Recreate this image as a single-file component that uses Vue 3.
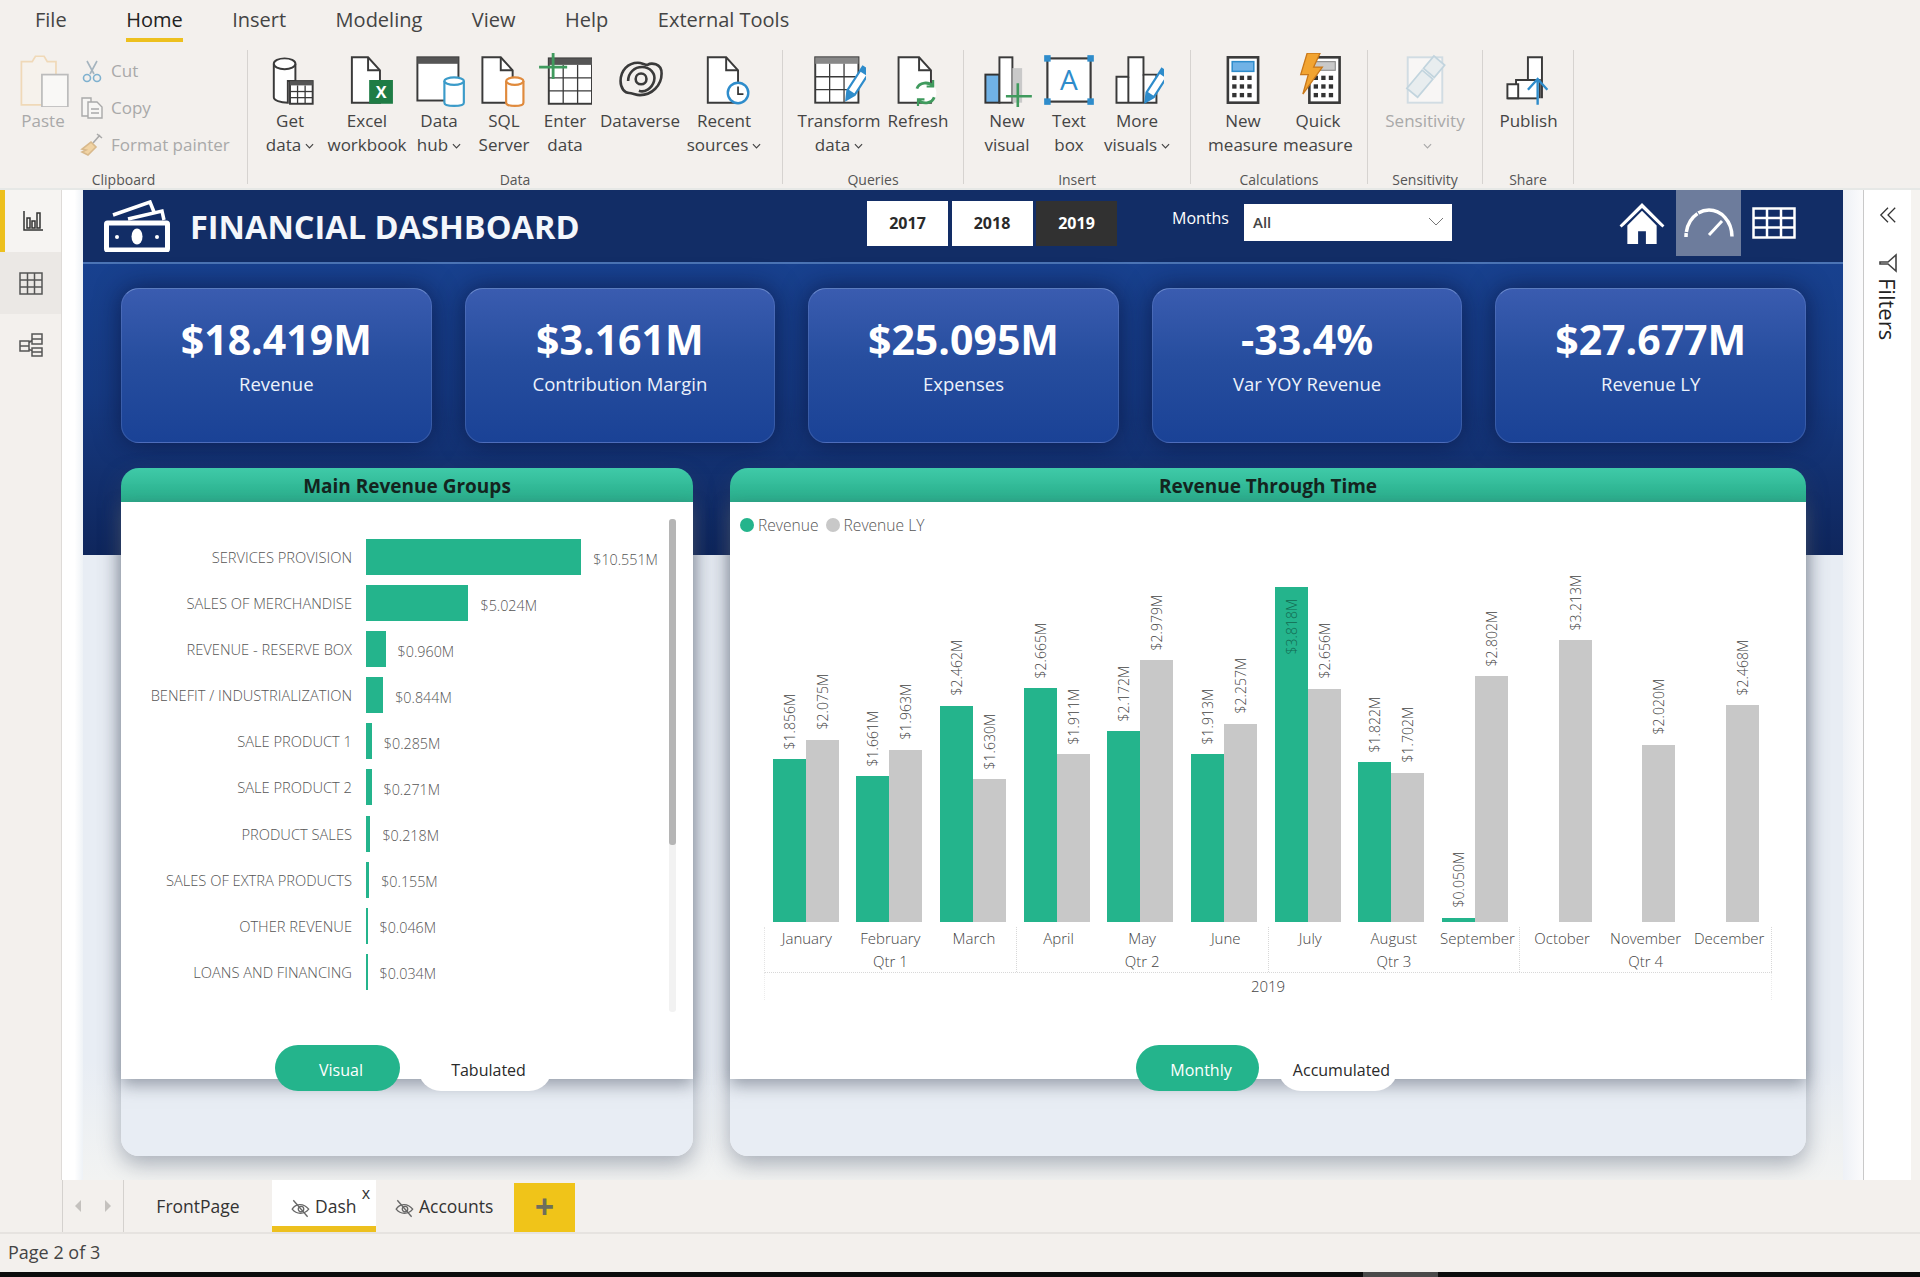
<script setup>
const grid = (x, y, w, h, c, r, head = 5, headFill = '#555') => {
  let out = `<rect x="${x}" y="${y}" width="${w}" height="${h}" fill="#fff"/><rect x="${x}" y="${y}" width="${w}" height="${head}" fill="${headFill}" stroke="none"/>`
  for (let i = 1; i < c; i++) out += `<path stroke-width="1.2" d="M${x + (w / c) * i} ${y + head}V${y + h}"/>`
  for (let i = 1; i < r; i++) out += `<path stroke-width="1.2" d="M${x} ${y + head + ((h - head) / r) * i}H${x + w}"/>`
  return out
}
const doc = (x, y, w, h) =>
  `<path fill="#fff" d="M${x} ${y}h${w - 11}l11 12v${h - 12}h-${w}z"/><path d="M${x + w - 11} ${y}v12h11"/>`
const cyl = (cx, y, rx, h, color) =>
  `<g stroke="${color}" stroke-width="2"><path fill="#fff" d="M${cx - rx} ${y}v${h}c0 4 ${rx * 2} 4 ${rx * 2} 0v-${h}"/><ellipse fill="#fff" cx="${cx}" cy="${y}" rx="${rx}" ry="3.5"/></g>`
const pencil = (x, y, s = 1) =>
  `<g transform="translate(${x} ${y}) rotate(33) scale(${s})"><path fill="#fff" stroke="#2e8ccb" stroke-width="2" d="M-4-30h8v26l-4 8-4-8z"/><path fill="#2e8ccb" stroke="none" d="M-4-5h8l-4 9z M-4-30h8v5h-8z"/></g>`
const calc = (x, y) => {
  let keys = ''
  for (let r = 0; r < 3; r++) for (let c = 0; c < 3; c++) keys += `<rect stroke="none" fill="#333" x="${x + 4 + c * 7}" y="${y + 17 + r * 8}" width="4" height="4"/>`
  return `<rect fill="#fff" stroke-width="2.4" x="${x}" y="${y}" width="28" height="42"/>${keys}`
}

const icons = {
  getData: `<path fill="#fff" d="M10 10v31c0 3 6 5 13 5V26h7V10"/><ellipse fill="#fff" cx="20" cy="10" rx="10" ry="5"/>${grid(25, 26, 21, 21, 3, 3, 4)}`,
  excel: `${doc(11, 4, 26, 42)}<rect x="27" y="25" width="22" height="22" fill="#1e7c45" stroke="none"/><text x="38" y="42" text-anchor="middle" font-family="Open Sans" font-size="15" font-weight="700" fill="#fff" stroke="none">X</text>`,
  hub: `<rect fill="#fff" x="5" y="4" width="38" height="40"/><rect x="5" y="4" width="38" height="6" fill="#555" stroke="none"/>${cyl(39, 26, 9, 20, '#3b9bc9')}`,
  sql: `${doc(5, 4, 28, 42)}${cyl(35, 26, 8, 20, '#e08a3c')}`,
  enter: `${grid(10, 5, 40, 42, 3, 3, 6)}<path stroke="#3f9a5d" stroke-width="2.6" d="M14 0v24M1 13h26"/>`,
  dataverse: `<g stroke-width="2.4"><path d="M7 26c0-10 7-17 16-17 4 0 6 2 9 2 3-2 13-2 13 8 0 11-9 20-20 20-4 0-7-2-10-2-4 0-8-4-8-11z"/><path d="M14 26c0-8 6-13 13-13s13 6 11 13-9 11-14 9"/><circle cx="26" cy="24" r="5"/></g>`,
  recent: `${doc(10, 4, 28, 42)}<circle cx="38" cy="37" r="9.500" fill="#fff" stroke="#2e8ccb" stroke-width="2.2"/><path stroke="#333" stroke-width="1.6" d="M38 31v7h5"/>`,
  transform: `${grid(3, 4, 40, 42, 3, 3, 6, '#888')}${pencil(34, 40, 1)}`,
  refresh: `${doc(7, 4, 30, 42)}<circle cx="32" cy="37" r="10" fill="#fff" stroke="none"/><g stroke="#3f9a5d" stroke-width="2.6"><path d="M24 33c2-6 11-7 15-2"/><path d="M40 41c-2 6-11 7-15 2"/><path stroke-width="2" d="M39 25v6h-6M25 49v-6h6"/></g>`,
  newVisual: `<rect x="5" y="20" width="13" height="26" fill="#70b2e6" stroke="#333"/><rect fill="#fff" x="18" y="4" width="12" height="42"/><rect x="30" y="14" width="9" height="32" fill="#c9c9c9" stroke="none"/><path stroke="#3f9a5d" stroke-width="2.4" d="M35 28v22M24 40h24"/>`,
  textBox: `<rect fill="#fff" x="5" y="5" width="40" height="40" stroke-width="2"/><g fill="#2e8ccb" stroke="none"><rect x="2" y="2" width="6" height="6"/><rect x="42" y="2" width="6" height="6"/><rect x="2" y="42" width="6" height="6"/><rect x="42" y="42" width="6" height="6"/></g><text x="25" y="34" text-anchor="middle" font-family="Open Sans" font-size="26" fill="#2e8ccb" stroke="none">A</text>`,
  more: `<path fill="#fff" d="M6 46V22h11V4h14v16h12v26z"/><path d="M17 22v24M31 20v26"/>${pencil(35, 42, 1)}`,
  measure: `${calc(11, 4)}<rect x="15" y="8" width="20" height="9" fill="#70b2e6" stroke="#2e8ccb" stroke-width="1.4"/>`,
  quick: `${calc(17, 4)}<rect x="21" y="8" width="20" height="8" fill="#c9c9c9" stroke="#888" stroke-width="1"/><path fill="#f2a431" stroke="#c9781a" stroke-width="1.2" d="M15 0h12l-6 13h8L11 38l5-18H9z"/>`,
  sensitivity: `<g opacity=".45"><rect fill="#fff" stroke="#a9c6d8" x="9" y="4" width="32" height="42"/><g transform="rotate(40 25 22)" stroke="#87b4cd" fill="#dceaf2" stroke-width="1.6"><rect x="19" y="2" width="13" height="15"/><rect x="19" y="19" width="13" height="22"/></g></g>`,
  publish: `<path fill="#fff" d="M24 25V4h13v38M13 42V25h22v17"/><path fill="#fff" d="M5 42V29h10v13z"/><path d="M5 42h28"/><path stroke="#2e8ccb" stroke-width="2.2" d="M33 48V25M24 34l9-10 9 10"/>`,
}

const ribbon = [
  {
    label: 'Data', w: 535, items: [
      { icon: 'getData', w: 84, lines: ['Get', 'data'], drop: true },
      { icon: 'excel', w: 70, lines: ['Excel', 'workbook'] },
      { icon: 'hub', w: 74, lines: ['Data', 'hub'], drop: true },
      { icon: 'sql', w: 56, lines: ['SQL', 'Server'] },
      { icon: 'enter', w: 66, lines: ['Enter', 'data'] },
      { icon: 'dataverse', w: 84, lines: ['Dataverse'] },
      { icon: 'recent', w: 84, lines: ['Recent', 'sources'], drop: true },
    ],
  },
  {
    label: 'Queries', w: 181, pad: 12, items: [
      { icon: 'transform', w: 88, lines: ['Transform', 'data'], drop: true },
      { icon: 'refresh', w: 70, lines: ['Refresh'] },
    ],
  },
  {
    label: 'Insert', w: 227, pad: 8, items: [
      { icon: 'newVisual', w: 70, lines: ['New', 'visual'] },
      { icon: 'textBox', w: 54, lines: ['Text', 'box'] },
      { icon: 'more', w: 82, lines: ['More', 'visuals'], drop: true },
    ],
  },
  {
    label: 'Calculations', w: 177, pad: 12, items: [
      { icon: 'measure', w: 80, lines: ['New', 'measure'] },
      { icon: 'quick', w: 70, lines: ['Quick', 'measure'] },
    ],
  },
  {
    label: 'Sensitivity', w: 115, items: [
      { icon: 'sensitivity', w: 114, lines: ['Sensitivity', ''], drop: true, off: true },
    ],
  },
  {
    label: 'Share', w: 91, items: [{ icon: 'publish', w: 91, lines: ['Publish'] }],
  },
]

const kpis = [
  { value: '$18.419M', label: 'Revenue' },
  { value: '$3.161M', label: 'Contribution Margin' },
  { value: '$25.095M', label: 'Expenses' },
  { value: '-33.4%', label: 'Var YOY Revenue' },
  { value: '$27.677M', label: 'Revenue LY' },
]

const groups = [
  { name: 'SERVICES PROVISION', value: 10.551 },
  { name: 'SALES OF MERCHANDISE', value: 5.024 },
  { name: 'REVENUE - RESERVE BOX', value: 0.96 },
  { name: 'BENEFIT / INDUSTRIALIZATION', value: 0.844 },
  { name: 'SALE PRODUCT 1', value: 0.285 },
  { name: 'SALE PRODUCT 2', value: 0.271 },
  { name: 'PRODUCT SALES', value: 0.218 },
  { name: 'SALES OF EXTRA PRODUCTS', value: 0.155 },
  { name: 'OTHER REVENUE', value: 0.046 },
  { name: 'LOANS AND FINANCING', value: 0.034 },
]

const quarters = [
  {
    name: 'Qtr 1', months: [
      { name: 'January', rev: 1.856, ly: 2.075 },
      { name: 'February', rev: 1.661, ly: 1.963 },
      { name: 'March', rev: 2.462, ly: 1.63 },
    ],
  },
  {
    name: 'Qtr 2', months: [
      { name: 'April', rev: 2.665, ly: 1.911 },
      { name: 'May', rev: 2.172, ly: 2.979 },
      { name: 'June', rev: 1.913, ly: 2.257 },
    ],
  },
  {
    name: 'Qtr 3', months: [
      { name: 'July', rev: 3.818, ly: 2.656, inside: true },
      { name: 'August', rev: 1.822, ly: 1.702 },
      { name: 'September', rev: 0.05, ly: 2.802 },
    ],
  },
  {
    name: 'Qtr 4', months: [
      { name: 'October', rev: null, ly: 3.213 },
      { name: 'November', rev: null, ly: 2.02 },
      { name: 'December', rev: null, ly: 2.468 },
    ],
  },
]
const months = quarters.flatMap(q => q.months)

const money = v => `$${v.toFixed(3)}M`
const groupWidth = v => `${Math.max(v * 20.4, 1.5)}px`
const barHeight = v => `${v * 87.8}px`
</script>

<template>
  <div class="app">
    <header class="ribbon">
      <nav class="menu">
        <span class="first">File</span>
        <span class="active">Home</span>
        <span>Insert</span>
        <span>Modeling</span>
        <span>View</span>
        <span>Help</span>
        <span>External Tools</span>
      </nav>
      <div class="groups">
        <section class="group clipboard">
          <div class="items">
            <div class="item off paste">
              <svg class="icon" viewBox="0 0 50 50" fill="none" stroke-width="1.6">
                <path stroke="#f0d9b8" fill="#f6f2ec" d="M5 8h10l3-5h8l3 5h8v40H5z" />
                <rect x="24" y="20" width="24" height="30" fill="#f9f8f6" stroke="#bcbcbc" />
              </svg>
              <span>Paste</span>
            </div>
            <ul class="small">
              <li>
                <svg viewBox="0 0 24 24" fill="none" stroke="#a5b4bf" stroke-width="1.6">
                  <path d="M7 2l7 13M17 2L10 15" />
                  <circle cx="7" cy="19" r="3.5" stroke="#7fb1cf" />
                  <circle cx="17" cy="19" r="3.5" stroke="#7fb1cf" />
                </svg>
                Cut
              </li>
              <li>
                <svg viewBox="0 0 24 24" fill="#f7f6f4" stroke="#a9a9a9" stroke-width="1.4">
                  <path d="M2 2h9v18H2z" />
                  <path d="M8 6h9l5 5v11H8z" />
                  <path d="M11 13h8M11 17h8" />
                </svg>
                Copy
              </li>
              <li>
                <svg viewBox="0 0 24 24" fill="none" stroke-width="1.6">
                  <path stroke="#a9a9a9" d="M20 2l-7 8M17 1l5 4" />
                  <path fill="#f1d3a3" stroke="#d8b98c" d="M11 9l5 5-8 8-6-3 4-2-4-1z" />
                </svg>
                Format painter
              </li>
            </ul>
          </div>
          <div class="group-label">Clipboard</div>
        </section>
        <section
          v-for="g in ribbon"
          :key="g.label"
          class="group"
          :style="{ width: g.w + 'px' }"
        >
          <div class="items" :style="{ paddingLeft: (g.pad || 0) + 'px' }">
            <div
              v-for="it in g.items"
              :key="it.icon"
              class="item"
              :class="{ off: it.off }"
              :style="{ width: it.w + 'px' }"
            >
              <svg class="icon" viewBox="0 0 50 50" fill="none" stroke="#3a3a3a" stroke-width="1.8" v-html="icons[it.icon]"></svg>
              <span>{{ it.lines[0] }}</span>
              <span v-if="it.lines[1] !== undefined">
                {{ it.lines[1] }}<svg v-if="it.drop" class="drop" viewBox="0 0 10 6" fill="none" stroke="currentColor" stroke-width="1.3"><path d="M1 1l4 4 4-4" /></svg>
              </span>
            </div>
          </div>
          <div class="group-label">{{ g.label }}</div>
        </section>
      </div>
    </header>

    <div class="main">
      <aside class="rail">
        <div class="rail-btn current">
          <svg viewBox="0 0 24 24" fill="none" stroke="#333" stroke-width="1.5">
            <path d="M3 2v19h19" />
            <path d="M6 9h3v10H6zM11 12h3v7h-3zM16 4h3v15h-3z" />
          </svg>
        </div>
        <div class="rail-btn shaded">
          <svg viewBox="0 0 24 24" fill="none" stroke="#555" stroke-width="1.5">
            <path d="M1 2h22v21H1zM1 9h22M1 16h22M8.5 2v21M15.5 2v21" />
          </svg>
        </div>
        <div class="rail-btn">
          <svg viewBox="0 0 24 24" fill="none" stroke="#555" stroke-width="1.5">
            <path d="M1 8h9v5H1zM1 13h9v5H1zM13 1h10v5H13zM13 6h10v5H13zM13 15h10v4H13zM13 19h10v4H13zM10 10l3-3M10 16l3 2" />
          </svg>
        </div>
      </aside>

      <div class="gutter-left"></div>

      <main class="canvas">
        <div class="top-bar">
          <svg class="logo" viewBox="0 0 66 52" fill="none" stroke="#fff">
            <rect x="2.500" y="23" width="61" height="27" stroke-width="5" rx="1" />
            <path stroke-width="3.500" d="M9 15L46 2l4 10" />
            <path stroke-width="3.500" d="M24 19l34-8 2 9" />
            <ellipse cx="33" cy="36.500" rx="5.500" ry="8" fill="#fff" stroke="none" />
            <circle cx="13" cy="37" r="2" fill="#fff" stroke="none" />
            <circle cx="53" cy="37" r="2" fill="#fff" stroke="none" />
          </svg>
          <h1 class="title">FINANCIAL DASHBOARD</h1>
          <div class="years">
            <button>2017</button>
            <button>2018</button>
            <button class="picked">2019</button>
          </div>
          <span class="months-label">Months</span>
          <div class="slicer">
            <span>All</span>
            <svg viewBox="0 0 16 10" fill="none" stroke="#777" stroke-width="1"><path d="M1 1l7 7 7-7" /></svg>
          </div>
          <svg class="nav-home" viewBox="0 0 46 42" fill="#fff">
            <path fill-rule="evenodd" d="M23 0L46 23l-2 2-3-2.500L23 5 5 22.500 2 25l-2-2z" />
            <path fill-rule="evenodd" d="M23 8l15 15v19H27V29h-8v13H8V23z" />
          </svg>
          <div class="nav-gauge">
            <svg viewBox="0 0 52 32" fill="none" stroke="#fff" stroke-width="3.500">
              <path d="M3 30C3 14 14 3 26 3s23 11 23 27" stroke-dasharray="4 1 22 1 50" />
              <path stroke-width="3" d="M26 28l13-14" />
            </svg>
          </div>
          <svg class="nav-table" viewBox="0 0 44 32" fill="none" stroke="#fff" stroke-width="2.500">
            <path d="M1.500 1.500h41v29h-41zM1.500 11h41M1.500 20.500h41M15 1.500v29M29 1.500v29" />
          </svg>
        </div>

        <div class="kpis">
          <div v-for="k in kpis" :key="k.label" class="kpi">
            <div class="kpi-value">{{ k.value }}</div>
            <div class="kpi-label">{{ k.label }}</div>
          </div>
        </div>

        <div class="panels">
          <section class="panel">
            <h2 class="panel-head">Main Revenue Groups</h2>
            <div class="panel-body">
              <div class="bars-wrap">
                <div class="hbars">
                  <div v-for="r in groups" :key="r.name" class="hrow">
                    <span class="hname">{{ r.name }}</span>
                    <span class="hbar" :style="{ width: groupWidth(r.value) }"></span>
                    <span class="hval">{{ money(r.value) }}</span>
                  </div>
                </div>
                <div class="scrollbar"><div class="thumb"></div></div>
              </div>
              <div class="pills pills-left">
                <span class="pill on visual">Visual</span>
                <span class="pill tabulated">Tabulated</span>
              </div>
            </div>
            <div class="panel-foot"></div>
          </section>

          <section class="panel">
            <h2 class="panel-head">Revenue Through Time</h2>
            <div class="panel-body chart-body">
              <div class="legend">
                <i class="dot green"></i><span>Revenue</span>
                <i class="dot gray"></i><span>Revenue LY</span>
              </div>
              <div class="plot">
                <div v-for="m in months" :key="m.name" class="month">
                  <div class="slot">
                    <template v-if="m.rev !== null">
                      <span v-if="!m.inside" class="val">{{ money(m.rev) }}</span>
                      <div class="bar green" :style="{ height: barHeight(m.rev) }">
                        <span v-if="m.inside" class="val inner">{{ money(m.rev) }}</span>
                      </div>
                    </template>
                  </div>
                  <div class="slot">
                    <span class="val">{{ money(m.ly) }}</span>
                    <div class="bar gray" :style="{ height: barHeight(m.ly) }"></div>
                  </div>
                </div>
              </div>
              <div class="axis">
                <div v-for="q in quarters" :key="q.name" class="quarter">
                  <span v-for="m in q.months" :key="m.name" class="tick">{{ m.name }}</span>
                  <span class="qname">{{ q.name }}</span>
                </div>
              </div>
              <div class="year">2019</div>
              <div class="pills pills-right">
                <span class="pill on monthly">Monthly</span>
                <span class="pill accumulated">Accumulated</span>
              </div>
            </div>
            <div class="panel-foot"></div>
          </section>
        </div>
      </main>

      <div class="gutter-right"></div>

      <aside class="filters">
        <svg class="collapse" viewBox="0 0 20 20" fill="none" stroke="#333" stroke-width="1.4">
          <path d="M10 2L2 10l8 8M18 2l-8 8 8 8" />
        </svg>
        <svg class="funnel" viewBox="0 0 20 20" fill="none" stroke="#444" stroke-width="1.6">
          <path d="M18 2v16L10 11H2V9h8z" />
        </svg>
        <span class="filters-text">Filters</span>
      </aside>
    </div>

    <div class="tabbar">
      <div class="tab-arrows">
        <i class="arrow back"></i>
        <i class="arrow fwd"></i>
      </div>
      <div class="tab front">FrontPage</div>
      <div class="tab dash">
        <svg class="hidden-icon" viewBox="0 0 20 20" fill="none" stroke="#666" stroke-width="1.2">
          <path d="M2 11c3-5 10-6 15 0-4 5-11 5-15 0z" />
          <circle cx="10" cy="11" r="2.500" />
          <path d="M3 3l13 15" />
        </svg>
        Dash
        <span class="close">x</span>
      </div>
      <div class="tab accounts">
        <svg class="hidden-icon" viewBox="0 0 20 20" fill="none" stroke="#666" stroke-width="1.2">
          <path d="M2 11c3-5 10-6 15 0-4 5-11 5-15 0z" />
          <circle cx="10" cy="11" r="2.500" />
          <path d="M3 3l13 15" />
        </svg>
        Accounts
      </div>
      <div class="add">+</div>
    </div>

    <footer class="status">Page 2 of 3</footer>
    <div class="taskbar"><i></i></div>
  </div>
</template>

<style scoped>
.app {
  width: 1920px;
  height: 1277px;
  display: flex;
  flex-direction: column;
  background: #f3f0ed;
  color: #333;
  font-family: "Open Sans", "Liberation Sans", sans-serif;
  overflow: hidden;
}

/* ribbon */
.ribbon {
  height: 190px;
  flex: none;
  background: #f3f0ed;
  border-bottom: 2px solid #e6e8e6;
  box-sizing: border-box;
}
.menu {
  height: 50px;
  padding-left: 35px;
  box-sizing: border-box;
  display: flex;
  gap: 49.500px;
  font-size: 20px;
  line-height: 40px;
  color: #444;
}
.menu .first {
  margin-right: 10px;
}
.menu .active {
  height: 42px;
  color: #222;
  font-weight: 500;
  border-bottom: 4px solid #edc01e;
  box-sizing: border-box;
}
.groups {
  display: flex;
}
.group {
  height: 134px;
  box-sizing: border-box;
  flex: none;
  display: flex;
  flex-direction: column;
  border-right: 1.500px solid #d6d3d0;
}
.clipboard {
  width: 248px;
}
.clipboard .items {
  padding-left: 8px;
}
.items {
  flex: 1;
  display: flex;
}
.group-label {
  height: 20px;
  margin-bottom: -6px;
  margin-top: -2px;
  text-align: center;
  font-size: 14px;
  line-height: 20px;
  color: #555;
}
.item {
  flex: none;
  display: flex;
  flex-direction: column;
  align-items: center;
  font-size: 17px;
  line-height: 24px;
  color: #444;
  white-space: nowrap;
  padding-top: 3px;
}
.item.off {
  color: #a9a9a9;
}
.paste {
  width: 70px;
}
.icon {
  width: 54px;
  height: 54px;
  margin-bottom: 2px;
}
.drop {
  width: 9px;
  height: 6px;
  margin-left: 4px;
  vertical-align: 2px;
}
.small {
  list-style: none;
  margin: 0;
  padding: 2px 0 0 2px;
  font-size: 17px;
  color: #a9a9a9;
}
.small li {
  height: 37px;
  display: flex;
  align-items: center;
  gap: 7px;
  white-space: nowrap;
}
.small svg {
  width: 24px;
  height: 24px;
  flex: none;
}

/* middle */
.main {
  height: 990px;
  flex: none;
  display: flex;
  background: #fff;
}
.rail {
  width: 62px;
  flex: none;
  background: #f3f0ed;
  border-right: 1px solid #dedbd8;
  box-sizing: border-box;
}
.rail-btn {
  height: 62px;
  display: flex;
  align-items: center;
  justify-content: center;
}
.rail-btn svg {
  width: 24px;
  height: 26px;
}
.rail-btn.current {
  background: #f6f4f2;
  border-left: 5px solid #edc01e;
}
.rail-btn.shaded {
  background: #ebe8e5;
}
.gutter-left {
  width: 21px;
  flex: none;
  background: linear-gradient(90deg, #fff 60%, #eef2f6);
}
.gutter-right {
  width: 20px;
  flex: none;
  background: linear-gradient(90deg, #eef1f6, #fbfbfc);
  border-right: 1px solid #c9c9c9;
}
.canvas {
  width: 1760px;
  flex: none;
  box-sizing: border-box;
  padding-bottom: 24px;
  background:
    linear-gradient(180deg, #18418f 0, #163a82 45%, #0f265c 100%) 0 72px / 100% 293px no-repeat,
    linear-gradient(180deg, #e8edf4, #e8edf4 88%, #f2f3f2);
}
.top-bar {
  height: 74px;
  box-sizing: border-box;
  background: #122d66;
  border-bottom: 2px solid #4b74b5;
  display: flex;
  align-items: center;
  padding-left: 21px;
}
.logo {
  width: 66px;
  height: 52px;
  flex: none;
}
.title {
  width: 677px;
  flex: none;
  margin: 0 0 0 20px;
  font-size: 32.500px;
  font-weight: 700;
  color: #f4f7fb;
  white-space: nowrap;
}
.years {
  display: flex;
  gap: 3.500px;
  margin-bottom: 6px;
  flex: none;
}
.years button {
  width: 81px;
  height: 45px;
  border: none;
  padding: 0;
  background: #fff;
  color: #2a2a2a;
  font: 700 16px "Open Sans", sans-serif;
}
.years .picked {
  background: #313131;
  color: #fff;
}
.months-label {
  width: 72px;
  flex: none;
  margin-left: 55px;
  margin-bottom: 16px;
  color: #fff;
  font-size: 16px;
}
.slicer {
  width: 208px;
  height: 37px;
  flex: none;
  margin-bottom: 8px;
  background: #fff;
  box-sizing: border-box;
  padding: 0 8px 0 9px;
  display: flex;
  align-items: center;
  justify-content: space-between;
  font-size: 15px;
  font-weight: 600;
  color: #444;
}
.slicer svg {
  width: 16px;
  height: 10px;
}
.nav-home {
  width: 46px;
  height: 41px;
  flex: none;
  margin-left: 167px;
  margin-bottom: 6px;
}
.nav-gauge {
  width: 65px;
  height: 66px;
  flex: none;
  margin-left: 11px;
  margin-bottom: 6px;
  background: #6d7c9c;
  display: flex;
  align-items: center;
  justify-content: center;
}
.nav-gauge svg {
  width: 52px;
  height: 32px;
}
.nav-table {
  width: 44px;
  height: 32px;
  flex: none;
  margin-left: 11px;
  margin-bottom: 6px;
}

.kpis {
  display: grid;
  grid-template-columns: repeat(5, 1fr);
  gap: 33px;
  padding: 24px 37px 0 38px;
}
.kpi {
  height: 155px;
  box-sizing: border-box;
  border-radius: 18px;
  border: 1px solid rgba(150, 175, 230, 0.22);
  border-top-color: rgba(170, 195, 240, 0.45);
  background: linear-gradient(180deg, #3a5cb0 0, #274e9f 45%, #1a4296 100%);
  box-shadow: 0 0 26px rgba(8, 18, 60, 0.7);
  text-align: center;
  color: #fff;
  padding-top: 24px;
}
.kpi-value {
  font-size: 41px;
  font-weight: 700;
  line-height: 52px;
}
.kpi-label {
  margin-top: 4px;
  font-size: 18.500px;
  line-height: 30px;
  color: #edf2fb;
}

.panels {
  display: grid;
  grid-template-columns: 572px 1076px;
  gap: 37px;
  padding: 25px 37px 0 38px;
}
.panel {
  border-radius: 18px;
  box-shadow: 0 8px 22px rgba(60, 72, 95, 0.4);
}
.panel-head {
  margin: 0;
  height: 34px;
  border-radius: 18px 18px 0 0;
  background: linear-gradient(180deg, #3fcaa8, #28ad8a);
  text-align: center;
  font-size: 19px;
  font-weight: 700;
  line-height: 36px;
  color: #14251f;
}
.panel-body {
  position: relative;
  z-index: 1;
  height: 577px;
  box-sizing: border-box;
  padding-top: 17px;
  background: #fff;
  box-shadow: 0 6px 16px rgba(80, 90, 105, 0.55);
  display: flex;
  flex-direction: column;
}
.panel-foot {
  height: 77px;
  background: #e8edf4;
  border-radius: 0 0 18px 18px;
}
.bars-wrap {
  height: 493px;
  flex: none;
  display: flex;
}
.hbars {
  flex: 1;
  padding-top: 20px;
}
.hrow {
  height: 36px;
  margin-bottom: 10.100px;
  display: flex;
  align-items: center;
  font-size: 14.700px;
  font-weight: 300;
  color: #555;
  white-space: nowrap;
}
.hname {
  width: 231px;
  flex: none;
  margin-right: 14px;
  text-align: right;
}
.hbar {
  height: 36px;
  flex: none;
  background: #24b48c;
}
.hval {
  margin-left: 12px;
  padding-top: 4px;
  font-size: 14.300px;
}
.scrollbar {
  width: 7px;
  flex: none;
  margin-right: 17px;
  background: #f2f2f2;
  border-radius: 3px;
}
.thumb {
  height: 326px;
  background: #b5b5b5;
  border-radius: 3px;
}
.pills {
  display: flex;
  margin-top: 33px;
  margin-bottom: -12px;
}
.pills-left {
  padding-left: 154px;
  gap: 18px;
}
.pills-right {
  padding-left: 406px;
  gap: 19px;
  margin-top: 45px;
}
.pill {
  height: 46px;
  box-sizing: border-box;
  padding-left: 7px;
  border-radius: 23px;
  background: #fff;
  color: #2a2a2a;
  font-size: 16px;
  line-height: 50px;
  text-align: center;
  flex: none;
}
.pill.on {
  background: #24b48c;
  color: #fff;
}
.visual {
  width: 125px;
}
.tabulated {
  width: 134px;
}
.monthly {
  width: 123px;
}
.accumulated {
  width: 120px;
}

/* column chart */
.chart-body {
  padding-top: 13px;
}
.legend {
  height: 20px;
  flex: none;
  padding-left: 10px;
  display: flex;
  align-items: center;
  font-size: 15.600px;
  font-weight: 300;
  color: #555;
}
.dot {
  width: 14px;
  height: 14px;
  border-radius: 50%;
  margin-right: 4px;
}
.dot.gray {
  margin-left: 7px;
}
.green {
  background: #24b48c;
}
.gray {
  background: #c8c8c8;
}
.plot {
  height: 387px;
  flex: none;
  margin: 0 38px 0 34px;
  display: grid;
  grid-template-columns: repeat(12, 1fr);
}
.month {
  display: flex;
  justify-content: center;
  align-items: flex-end;
}
.slot {
  width: 33px;
  display: flex;
  flex-direction: column;
  align-items: center;
  justify-content: flex-end;
}
.bar {
  width: 100%;
  position: relative;
}
.val {
  writing-mode: vertical-rl;
  transform: rotate(180deg);
  font-size: 14px;
  font-weight: 300;
  color: #444;
  white-space: nowrap;
  margin-bottom: 10px;
}
.val.inner {
  position: absolute;
  top: 12px;
  left: 7px;
  color: #136a52;
  margin: 0;
}
.axis {
  margin: 5px 34px 0;
  display: grid;
  grid-template-columns: repeat(4, 1fr);
  border-bottom: 1px dotted #d8d8d8;
  border-left: 1px dotted #e4e4e4;
}
.quarter {
  display: grid;
  grid-template-columns: repeat(3, 1fr);
  border-right: 1px dotted #d8d8d8;
  text-align: center;
  font-size: 15px;
  font-weight: 300;
  line-height: 22.500px;
  color: #444;
}
.tick {
  white-space: nowrap;
}
.qname {
  grid-column: span 3;
}
.year {
  height: 27px;
  flex: none;
  margin: 0 34px;
  border: dotted #ececec;
  border-width: 0 1px;
  text-align: center;
  font-size: 15px;
  font-weight: 300;
  line-height: 27px;
  color: #444;
}

/* filters */
.filters {
  flex: 1;
  display: flex;
  flex-direction: column;
  align-items: center;
  padding-right: 8px;
  background: linear-gradient(90deg, #fff 47px, #f5f3f0 47px);
}
.collapse {
  width: 18px;
  height: 20px;
  margin-top: 15px;
}
.funnel {
  width: 20px;
  height: 20px;
  margin-top: 28px;
}
.filters-text {
  writing-mode: vertical-rl;
  margin-top: 5px;
  font-size: 22px;
  font-weight: 500;
  color: #222;
}

/* page tabs */
.tabbar {
  height: 52px;
  flex: none;
  display: flex;
  background: #f3f0ed;
  font-size: 17.500px;
  color: #333;
}
.tab-arrows {
  width: 62px;
  margin-left: 62px;
  box-sizing: border-box;
  border: solid #d4d1ce;
  border-width: 0 1px;
  display: flex;
  align-items: center;
  justify-content: space-around;
}
.arrow {
  width: 0;
  height: 0;
  border: 6px solid transparent;
}
.arrow.back {
  border-left: 0;
  border-right: 6px solid #c4c1be;
}
.arrow.fwd {
  border-right: 0;
  border-left: 6px solid #c4c1be;
}
.tab {
  display: flex;
  align-items: center;
  white-space: nowrap;
  box-sizing: border-box;
}
.front {
  width: 148px;
  justify-content: center;
}
.dash {
  width: 104px;
  position: relative;
  padding-left: 18px;
  gap: 3px;
  background: #fff;
  border-bottom: 6px solid #edc01e;
  padding-top: 6px;
}
.close {
  position: absolute;
  right: 6px;
  top: 2px;
  font-size: 16px;
}
.accounts {
  width: 138px;
  padding-left: 18px;
  gap: 3px;
}
.hidden-icon {
  width: 22px;
  height: 22px;
  margin-top: 4px;
}
.add {
  width: 61px;
  height: 49px;
  margin-top: 3px;
  background: #f0c419;
  color: #6e6e5c;
  font-size: 34px;
  font-weight: 700;
  line-height: 46px;
  text-align: center;
}
.status {
  height: 40px;
  flex: none;
  box-sizing: border-box;
  border-top: 2px solid #e6e3e0;
  padding-left: 8px;
  background: #f3f0ed;
  font-size: 18px;
  line-height: 36px;
  color: #444;
}
.taskbar {
  height: 5px;
  flex: none;
  background: #0c0c0c;
  padding-left: 1363px;
}
.taskbar i {
  display: block;
  width: 75px;
  height: 5px;
  background: #4a4a4a;
}
</style>

<style>
html, body {
  margin: 0;
  overflow: hidden;
}
</style>
